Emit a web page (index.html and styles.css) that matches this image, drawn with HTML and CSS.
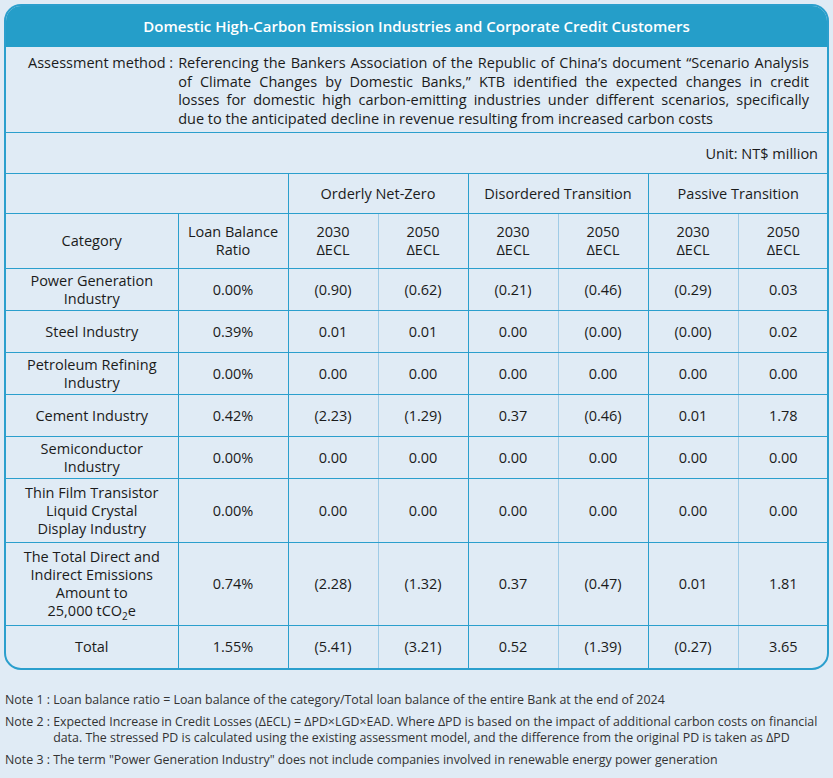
FILE: index.html
```html
<!DOCTYPE html>
<html lang="en">
<head>
<meta charset="utf-8">
<link rel="stylesheet" href="styles.css">
</head>
<body>
<div class="page">
  <div class="card">
    <div class="title">Domestic High-Carbon Emission Industries and Corporate Credit Customers</div>
    <div class="method">
      <div class="method-label">Assessment method :</div>
      <div class="method-text">
        <span class="jl">Referencing the Bankers Association of the Republic of China’s document “Scenario Analysis</span>
        <span class="jl">of Climate Changes by Domestic Banks,” KTB identified the expected changes in credit</span>
        <span class="jl">losses for domestic high carbon-emitting industries under different scenarios, specifically</span>
        <span class="ll">due to the anticipated decline in revenue resulting from increased carbon costs</span>
      </div>
    </div>
    <table class="grid">
      <colgroup>
        <col class="c-cat"><col class="c-ratio"><col class="c-y"><col class="c-y"><col class="c-y"><col class="c-y"><col class="c-y"><col class="c-y">
      </colgroup>
      <tr class="r-unit"><td colspan="8" class="unit">Unit: NT$ million</td></tr>
      <tr class="r-h1">
        <td colspan="2"></td>
        <td colspan="2">Orderly Net-Zero</td>
        <td colspan="2">Disordered Transition</td>
        <td colspan="2" class="last">Passive Transition</td>
      </tr>
      <tr class="r-h2">
        <td>Category</td>
        <td>Loan Balance<br>Ratio</td>
        <td class="lt">2030<br>ΔECL</td><td>2050<br>ΔECL</td>
        <td class="lt">2030<br>ΔECL</td><td>2050<br>ΔECL</td>
        <td class="lt">2030<br>ΔECL</td><td class="last">2050<br>ΔECL</td>
      </tr>
      <tr class="r-d"><td>Power Generation<br>Industry</td><td>0.00%</td><td class="lt">(0.90)</td><td>(0.62)</td><td class="lt">(0.21)</td><td>(0.46)</td><td class="lt">(0.29)</td><td class="last">0.03</td></tr>
      <tr class="r-d"><td>Steel Industry</td><td>0.39%</td><td class="lt">0.01</td><td>0.01</td><td class="lt">0.00</td><td>(0.00)</td><td class="lt">(0.00)</td><td class="last">0.02</td></tr>
      <tr class="r-d"><td>Petroleum Refining<br>Industry</td><td>0.00%</td><td class="lt">0.00</td><td>0.00</td><td class="lt">0.00</td><td>0.00</td><td class="lt">0.00</td><td class="last">0.00</td></tr>
      <tr class="r-d"><td>Cement Industry</td><td>0.42%</td><td class="lt">(2.23)</td><td>(1.29)</td><td class="lt">0.37</td><td>(0.46)</td><td class="lt">0.01</td><td class="last">1.78</td></tr>
      <tr class="r-d"><td>Semiconductor<br>Industry</td><td>0.00%</td><td class="lt">0.00</td><td>0.00</td><td class="lt">0.00</td><td>0.00</td><td class="lt">0.00</td><td class="last">0.00</td></tr>
      <tr class="r-tft"><td>Thin Film Transistor<br>Liquid Crystal<br>Display Industry</td><td>0.00%</td><td class="lt">0.00</td><td>0.00</td><td class="lt">0.00</td><td>0.00</td><td class="lt">0.00</td><td class="last">0.00</td></tr>
      <tr class="r-tot"><td>The Total Direct and<br>Indirect Emissions<br>Amount to<br>25,000 tCO<sub>2</sub>e</td><td>0.74%</td><td class="lt">(2.28)</td><td>(1.32)</td><td class="lt">0.37</td><td>(0.47)</td><td class="lt">0.01</td><td class="last">1.81</td></tr>
      <tr class="r-end"><td>Total</td><td>1.55%</td><td class="lt">(5.41)</td><td>(3.21)</td><td class="lt">0.52</td><td>(1.39)</td><td class="lt">(0.27)</td><td class="last">3.65</td></tr>
    </table>
  </div>
  <div class="notes">
    <div class="note"><span class="note-label">Note 1 : </span><span class="note-text">Loan balance ratio = Loan balance of the category/Total loan balance of the entire Bank at the end of 2024</span></div>
    <div class="note"><span class="note-label">Note 2 : </span><span class="note-text">Expected Increase in Credit Losses (ΔECL) = ΔPD×LGD×EAD. Where ΔPD is based on the impact of additional carbon costs on financial data. The stressed PD is calculated using the existing assessment model, and the difference from the original PD is taken as ΔPD</span></div>
    <div class="note"><span class="note-label">Note 3 : </span><span class="note-text">The term "Power Generation Industry" does not include companies involved in renewable energy power generation</span></div>
  </div>
</div>
</body>
</html>
```

FILE: styles.css
```css
html, body {
  margin: 0;
  padding: 0;
  background: #e0ebf5;
}
body {
  font-family: "Open Sans", "Noto Sans", sans-serif;
  color: #1b1b1b;
  width: 833px;
  height: 778px;
  overflow: hidden;
}
.page {
  padding: 4px 4px 0 4px;
}
.card {
  width: 821px;
  border: 2px solid #2b9fcd;
  border-radius: 17px;
  overflow: hidden;
  background: #e0ebf5;
}
.title {
  background: #259ec9;
  color: #ffffff;
  font-size: 15px;
  font-weight: 600;
  text-align: center;
  height: 41px;
  line-height: 41px;
}
.method {
  display: flex;
  padding: 7px 18px 4px 22px;
  font-size: 14.5px;
  line-height: 18.6px;
  border-bottom: 1px solid #2b9fcd;
}
.method-label {
  flex: none;
  white-space: nowrap;
  margin-right: 5px;
}
.method-text {
  flex: 1;
  min-width: 0;
}
.jl {
  display: block;
  text-align: justify;
  text-align-last: justify;
  white-space: nowrap;
}
.ll {
  display: block;
  text-align: left;
}
.grid {
  width: 100%;
  border-collapse: collapse;
  table-layout: fixed;
  font-size: 14.5px;
  line-height: 18px;
}
.c-cat { width: 172px; }
.c-ratio { width: 110px; }
.c-y { width: 90px; }
.grid td {
  text-align: center;
  vertical-align: middle;
  padding: 0 2px;
  border-right: 1px solid #2b9fcd;
  border-bottom: 1px solid #2b9fcd;
}
.grid td.lt {
  border-right-color: #9fcbe6;
}
.grid td.last, .grid td.unit { border-right: none; }
.grid tr.r-end td { border-bottom: none; height: 42px; }
.r-unit td { height: 38px; }
.grid td.unit {
  text-align: right;
  padding-right: 10px;
  padding-top: 2px;
}
.r-h1 td { height: 39px; }
.r-h2 td { height: 54px; }
.r-d td { height: 41px; }
.r-tft td { height: 63px; }
.r-tot td { height: 82px; }
sub {
  font-size: 10px;
  line-height: 0;
  vertical-align: -4px;
}
.notes {
  padding: 22px 0 0 1px;
  font-size: 12.4px;
  line-height: 16px;
  color: #333;
}
.note {
  display: flex;
  margin-bottom: 6px;
}
.note-label {
  flex: none;
  white-space: pre;
}
```
